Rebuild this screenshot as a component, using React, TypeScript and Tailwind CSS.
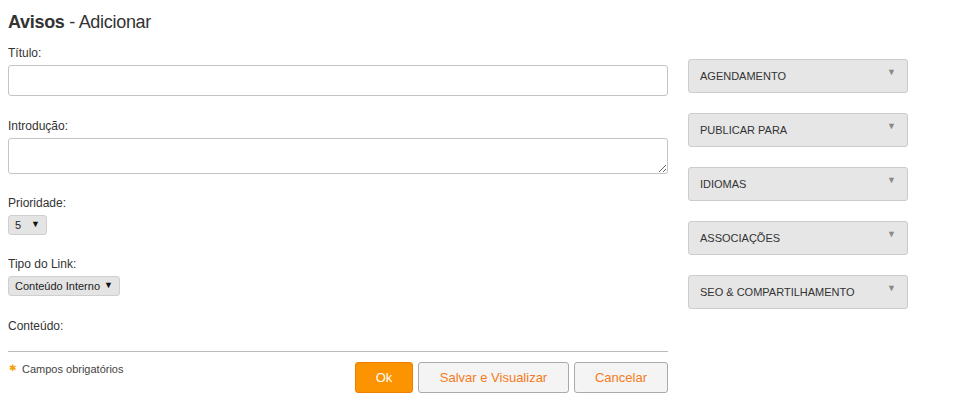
const panels = [
  "AGENDAMENTO",
  "PUBLICAR PARA",
  "IDIOMAS",
  "ASSOCIAÇÕES",
  "SEO & COMPARTILHAMENTO",
];

const Label = ({ children }: { children: React.ReactNode }) => (
  <label className="block text-[12px] leading-[16px] text-[#333] mb-[4px]">{children}</label>
);

const FakeSelect = ({ value, width }: { value: string; width: string }) => (
  <div
    className={`flex items-center justify-between h-[20px] ${width} pl-[6px] pr-[6px] bg-[#e4e4e4] border border-[#cfcfcf] rounded-[3px] text-[11px] text-[#222]`}
  >
    <span>{value}</span>
    <span className="text-[9px] text-[#111]">▼</span>
  </div>
);

const App = () => {
  return (
    <div className="w-[975px] h-[418px] bg-white px-[8px] font-['Liberation_Sans',Arial,sans-serif] text-[#333]">
      <h1 className="pt-[11px] text-[18px] leading-[22px] tracking-[-0.3px]">
        <span className="font-bold">Avisos</span> - Adicionar
      </h1>

      <div className="flex flex-row gap-[20px] mt-[12px]">
        {/* Left: form */}
        <div className="w-[660px] flex flex-col">
          <div className="mb-[22px]">
            <Label>Título:</Label>
            <input className="block w-full h-[31px] border border-[#c4c4c4] rounded-[3px] bg-white outline-none" />
          </div>

          <div className="mb-[21px]">
            <Label>Introdução:</Label>
            <textarea className="block w-full h-[36px] border border-[#c4c4c4] rounded-[3px] bg-white outline-none" />
          </div>

          <div className="mb-[21px]">
            <Label>Prioridade:</Label>
            <div className="mt-[2px]">
              <FakeSelect value="5" width="w-[39px]" />
            </div>
          </div>

          <div className="mb-[22px]">
            <Label>Tipo do Link:</Label>
            <div className="mt-[2px]">
              <FakeSelect value="Conteúdo Interno" width="w-[112px]" />
            </div>
          </div>

          <div>
            <Label>Conteúdo:</Label>
          </div>

          <div className="mt-[13px] border-t border-[#bbbbbb] pt-[10px] flex flex-row justify-between">
            <div className="flex items-center gap-[5px] h-[12px] mt-[1px] text-[11px] text-[#444]">
              <span className="text-[#f5a100] text-[9px] ml-[1px]">✱</span>
              <span>Campos obrigatórios</span>
            </div>
            <div className="flex flex-row gap-[5px]">
              <button className="h-[31px] w-[58px] bg-[#fb9400] border border-[#ef7f00] rounded-[3px] text-white text-[13px]">
                Ok
              </button>
              <button className="h-[31px] w-[151px] bg-[#f4f4f4] border border-[#aaaaaa] rounded-[3px] text-[#f47b20] text-[13px]">
                Salvar e Visualizar
              </button>
              <button className="h-[31px] w-[94px] bg-[#f4f4f4] border border-[#aaaaaa] rounded-[3px] text-[#f47b20] text-[13px]">
                Cancelar
              </button>
            </div>
          </div>
        </div>

        {/* Right: collapsible panels */}
        <div className="w-[220px] flex flex-col gap-[20px] pt-[14px]">
          {panels.map((p) => (
            <div
              key={p}
              className="relative h-[34px] flex items-center pl-[11px] bg-[#e6e6e6] border border-[#cccccc] rounded-[3px] text-[11px] text-[#333]"
            >
              <span>{p}</span>
              <span className="absolute right-[11px] top-[6px] text-[9px] text-[#888]">▼</span>
            </div>
          ))}
        </div>
      </div>
    </div>
  );
};

export default App;
